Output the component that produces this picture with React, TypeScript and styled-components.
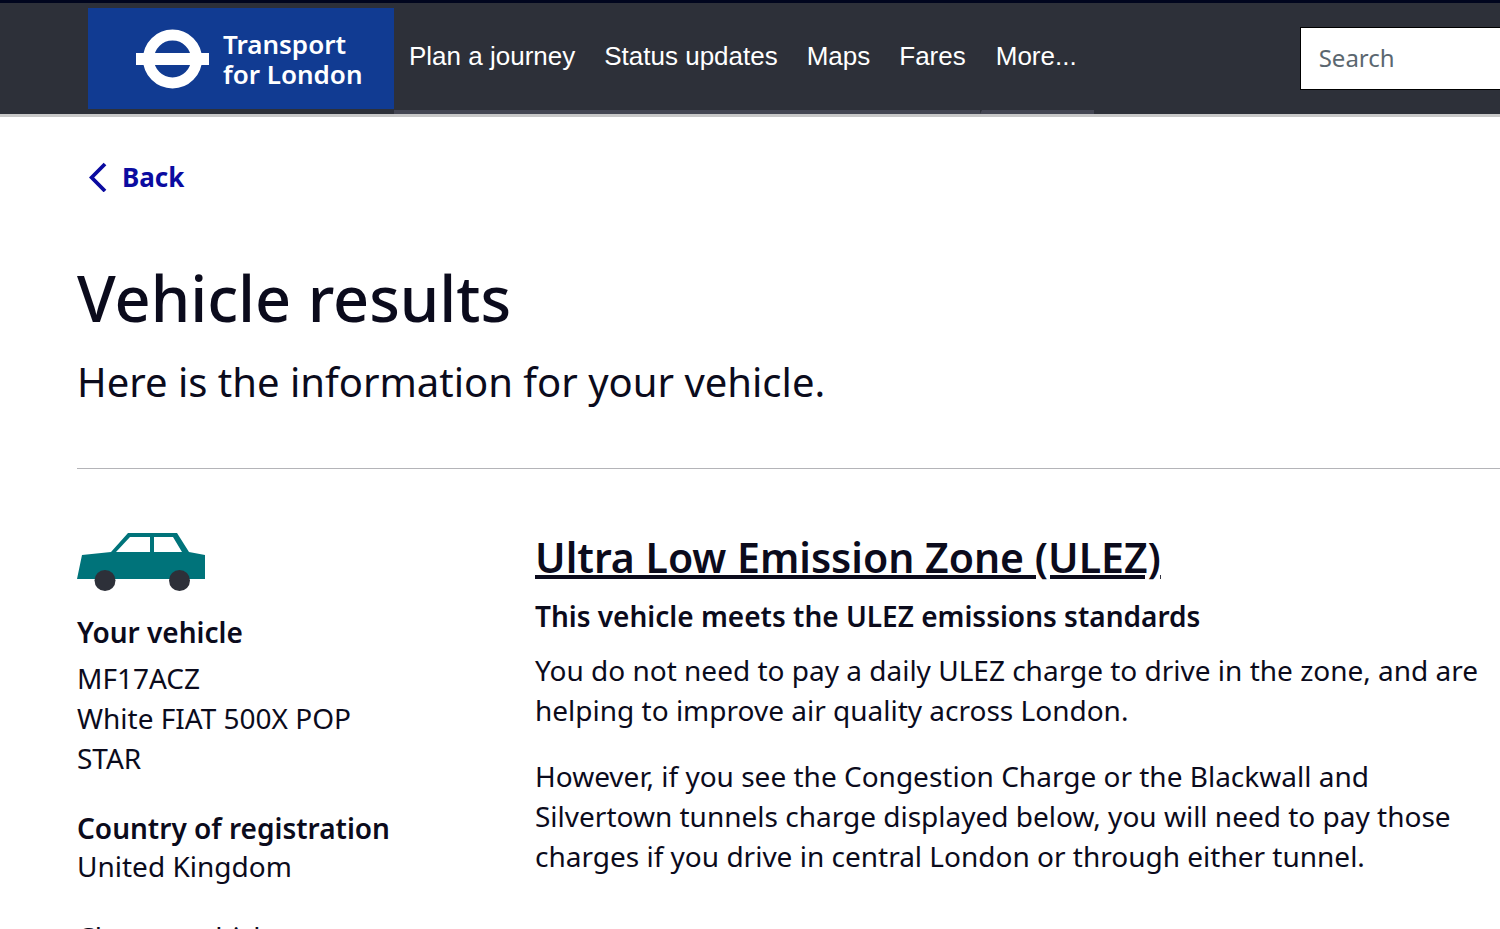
import React from "react";
import styled, { createGlobalStyle } from "styled-components";

const GlobalStyle = createGlobalStyle`
  * { box-sizing: border-box; }
  html, body { margin: 0; padding: 0; }
  body {
    background: #fff;
    color: #0b0b1c;
    font-family: "Noto Sans", sans-serif;
    font-size: 28px;
    line-height: 40px;
    overflow: hidden;
    height: 100vh;
  }
  h1, h2, h3, p { margin: 0; }
`;

const Header = styled.header`
  display: flex;
  align-items: stretch;
  height: 117px;
  padding-left: 88px;
  background: #2d3039;
  border-top: 3px solid #00051e;
  border-bottom: 3px solid #c8c8c8;
`;

const Logo = styled.a`
  display: flex;
  align-items: center;
  gap: 14px;
  width: 306px;
  height: 101px;
  margin-top: 5px;
  padding-left: 48px;
  flex-shrink: 0;
  background: #113b92;
  color: #fff;
  font-size: 26px;
  font-weight: 600;
  line-height: 30px;
  text-decoration: none;
`;

const Nav = styled.nav`
  display: flex;
  flex-shrink: 0;
  font-family: "Liberation Sans", Arial, sans-serif;
  font-size: 26px;
`;

const NavLink = styled.a<{ $divided?: boolean }>`
  display: flex;
  align-items: center;
  padding: ${(p) => (p.$divided ? "0 17px 2px 14px" : "0 14px 2px 15px")};
  border-bottom: 4px solid #444653;
  border-left: ${(p) => (p.$divided ? "2px solid #2d3039" : "0")};
  color: #fff;
  text-decoration: none;
`;

const SearchForm = styled.form`
  display: flex;
  flex: 1;
  margin: 24px 0 0 206px;
  height: 63px;
`;

const SearchInput = styled.input`
  width: 100%;
  min-width: 0;
  padding: 0 18px 2px;
  border: 1px solid #000;
  border-right: 0;
  border-radius: 0;
  background: #fff;
  font: 400 24px "Noto Sans", sans-serif;
  &::placeholder { color: #5b6770; opacity: 1; }
`;

const Main = styled.main`
  padding-left: 77px;
`;

const BackLink = styled.a`
  display: inline-flex;
  align-items: center;
  gap: 15px;
  margin: 40px 0 0 12px;
  color: #0b0ba0;
  font-weight: 700;
  font-size: 26px;
  text-decoration: none;
`;

const Title = styled.h1`
  margin-top: 57px;
  font-size: 63px;
  line-height: 80px;
  font-weight: 500;
`;

const Intro = styled.p`
  margin-top: 19px;
  font-size: 40px;
  line-height: 50px;
`;

const Results = styled.div`
  display: grid;
  grid-template-columns: 458px 1fr;
  margin-top: 61px;
  padding-top: 63px;
  border-top: 1px solid #b4b4b8;
`;

const Vehicle = styled.section`
  padding-right: 140px;
`;

const CarIcon = styled.svg`
  display: block;
  width: 128px;
  height: 60px;
`;

const Label = styled.h3<{ $gap: number }>`
  margin-top: ${(p) => p.$gap}px;
  font-size: 28px;
  font-weight: 600;
  line-height: 36px;
  white-space: nowrap;
`;

const Value = styled.p<{ $gap?: number }>`
  margin-top: ${(p) => p.$gap ?? 0}px;
`;

const ChangeLink = styled.a`
  display: block;
  margin-top: 31px;
  color: inherit;
  text-decoration: none;
`;

const ZoneTitle = styled.h2`
  font-size: 41px;
  font-weight: 600;
  line-height: 50px;

  a {
    color: inherit;
    text-decoration: underline;
    text-decoration-thickness: 4px;
  }
`;

const ZoneStatus = styled.h3`
  margin-top: 14px;
  font-size: 28px;
  font-weight: 600;
  line-height: 40px;
`;

const Paragraph = styled.p<{ $gap: number }>`
  margin-top: ${(p) => p.$gap}px;
`;

const links = ["Plan a journey", "Status updates", "Maps", "Fares", "More..."];

export default function App() {
  return (
    <>
      <GlobalStyle />
      <Header>
        <Logo href="#">
          <svg width="73" height="60" viewBox="0 0 73 60" aria-hidden="true">
            <circle cx="36.5" cy="30" r="24" fill="none" stroke="#fff" strokeWidth="11" />
            <rect y="24" width="73" height="12" fill="#fff" />
          </svg>
          <span>
            Transport
            <br />
            for London
          </span>
        </Logo>
        <Nav>
          {links.map((l) => (
            <NavLink key={l} href="#" $divided={l === "More..."}>
              {l}
            </NavLink>
          ))}
        </Nav>
        <SearchForm>
          <SearchInput type="search" aria-label="Search" placeholder="Search" />
        </SearchForm>
      </Header>
      <Main>
        <BackLink href="#">
          <svg width="18" height="30" viewBox="0 0 18 30" fill="none" stroke="currentColor" strokeWidth="3.8" aria-hidden="true">
            <path d="M16 2 2.600 15.500 16 29" />
          </svg>
          Back
        </BackLink>
        <Title>Vehicle results</Title>
        <Intro>Here is the information for your vehicle.</Intro>
        <Results>
          <Vehicle>
            <CarIcon viewBox="0 0 128 60" aria-hidden="true">
              <path
                fill="#00737a"
                fillRule="evenodd"
                d="M0 47 5 23 34 20 51 1H100L112 20 128 23V47ZM39 20H73V5H53ZM77 20H105L96 5H77Z"
              />
              <circle cx="28" cy="48.500" r="10.500" fill="#2d3039" />
              <circle cx="102.500" cy="48.500" r="10.500" fill="#2d3039" />
            </CarIcon>
            <Label $gap={22}>Your vehicle</Label>
            <Value $gap={8}>MF17ACZ</Value>
            <Value>White FIAT 500X POP STAR</Value>
            <Label $gap={32}>Country of registration</Label>
            <Value>United Kingdom</Value>
            <ChangeLink href="#">Change vehicle</ChangeLink>
          </Vehicle>
          <section>
            <ZoneTitle>
              <a href="#">Ultra Low Emission Zone (ULEZ)</a>
            </ZoneTitle>
            <ZoneStatus>This vehicle meets the ULEZ emissions standards</ZoneStatus>
            <Paragraph $gap={14}>
              You do not need to pay a daily ULEZ charge to drive in the zone, and are
              <br />
              helping to improve air quality across London.
            </Paragraph>
            <Paragraph $gap={26}>
              However, if you see the Congestion Charge or the Blackwall and
              <br />
              Silvertown tunnels charge displayed below, you will need to pay those
              <br />
              charges if you drive in central London or through either tunnel.
            </Paragraph>
          </section>
        </Results>
      </Main>
    </>
  );
}
